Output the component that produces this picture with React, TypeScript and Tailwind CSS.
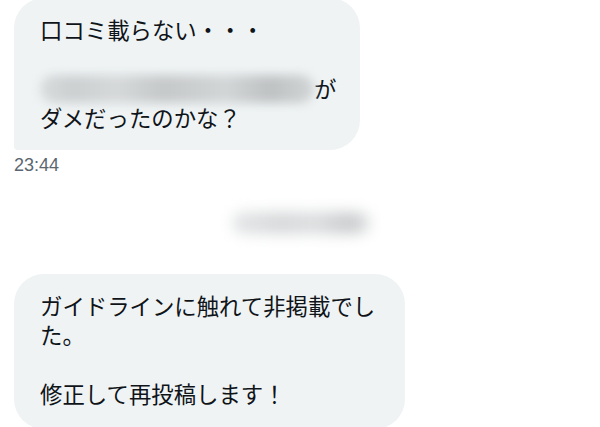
const jp = "font-['Hiragino_Sans','Noto_Sans_CJK_JP',sans-serif]";

function Bubble({ className, children }: { className: string; children: React.ReactNode }) {
  return (
    <div
      className={`bg-[#eff3f4] text-[#0f1419] text-[22.4px] leading-[29.4px] pl-[26px] pt-[17px] whitespace-pre-line ${jp} ${className}`}
    >
      {children}
    </div>
  );
}

export default function App() {
  return (
    <div className="w-[600px] h-[427px] overflow-hidden bg-white">
      <div className="flex flex-col px-[14px] -mt-[2px]">
        <Bubble className="w-[346px] pr-[20px] pb-[17px] rounded-tl-[30px] rounded-tr-[30px] rounded-br-[30px] rounded-bl-[4px]">
          {'口コミ載らない・・・\n\n'}
          <span className="inline-block w-[274px] h-[28px] align-[-5px] rounded-full blur-[5px] bg-[linear-gradient(90deg,#d9dcdd_0%,#ccd0d1_12%,#d6d9da_28%,#c6c9ca_45%,#cdd0d1_58%,#d3d6d7_68%,#bfc2c3_84%,#d2d5d6_100%)]" />
          {'が\nダメだったのかな？'}
        </Bubble>
        <div className="mt-[4px] text-[18px] leading-[22px] text-[#5b6670] font-['Liberation_Sans',Arial,sans-serif]">
          23:44
        </div>
        <div className="mt-[36px] pl-[218px]">
          <div className="w-[138px] h-[22px] rounded-full blur-[7px] bg-[linear-gradient(90deg,#e4e6e7_0%,#d6d8d9_35%,#dcdedf_60%,#c9cbcc_85%,#dfe1e2_100%)]" />
        </div>
        <Bubble className="mt-[40px] w-[391px] pr-[26px] pb-[21px] rounded-[30px]">
          {'ガイドラインに触れて非掲載でした。\n\n修正して再投稿します！'}
        </Bubble>
      </div>
    </div>
  );
}
